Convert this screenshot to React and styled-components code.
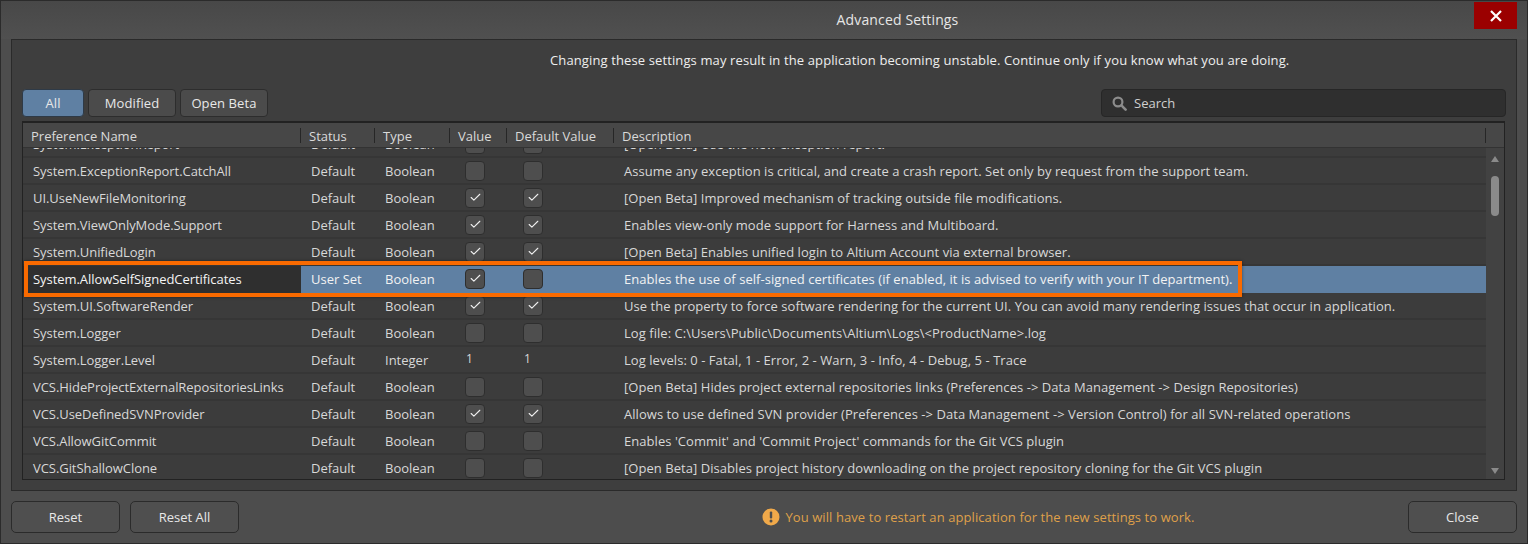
import React from 'react';
import styled, { createGlobalStyle } from 'styled-components';
import { Check } from 'lucide-react';

const GlobalStyle = createGlobalStyle`
  html, body {
    margin: 0;
    padding: 0;
    background: #4b4b4b;
  }
  * {
    box-sizing: border-box;
  }
`;

const Stage = styled.div`
  position: relative;
  width: 1528px;
  height: 544px;
`;

const Window = styled.div`
  width: 1528px;
  height: 544px;
  display: flex;
  flex-direction: column;
  background: #4d4d4d;
  border: 1px solid #2b2b2b;
  font-family: 'Open Sans', 'Noto Sans', sans-serif;
  font-size: 13px;
  color: #dcdcdc;
  overflow: hidden;
`;

const TitleBar = styled.div`
  height: 38px;
  flex: none;
  display: flex;
  align-items: center;
  justify-content: center;
  position: relative;
  font-size: 14px;
  letter-spacing: 0.14px;
  color: #e6e6e6;
  padding-left: 267px;
  padding-bottom: 1px;
  background: linear-gradient(#484848, #505050);
`;

const CloseButton = styled.button`
  position: absolute;
  top: 1px;
  right: 10px;
  width: 43px;
  height: 27px;
  border: 0;
  padding: 0;
  background: #9b0000;
  display: flex;
  align-items: center;
  justify-content: center;
`;

const Panel = styled.div`
  flex: none;
  height: 452px;
  margin: 0 10px;
  padding: 0 11px 10px 10px;
  background: #3e3e3e;
  border: 1px solid #2a2a2a;
  display: flex;
  flex-direction: column;
`;

const Warning = styled.div`
  height: 39px;
  flex: none;
  padding-left: 528px;
  display: flex;
  align-items: center;
  letter-spacing: 0.12px;
  color: #eeeeee;
`;

const FilterBar = styled.div`
  height: 42px;
  flex: none;
  padding-top: 10px;
  padding-bottom: 4px;
  display: flex;
  gap: 4px;
  justify-content: flex-start;
`;

const FilterButton = styled.button`
  width: ${p => p.$width}px;
  height: 28px;
  padding: 0;
  border-radius: 4px;
  border: 1px solid ${p => (p.$active ? '#2e3a47' : '#2d2d2d')};
  background: ${p => (p.$active ? '#5f80a3' : '#4b4b4b')};
  color: #e8e8e8;
  font: inherit;
  letter-spacing: 0.1px;
`;

const SearchBox = styled.div`
  width: 405px;
  height: 28px;
  margin-left: auto;
  margin-right: -1px;
  padding-left: 10px;
  display: flex;
  align-items: center;
  gap: 7px;
  border-radius: 4px;
  border: 1px solid #262626;
  background: #2f2f2f;
  color: #cfcfcf;
`;

const Table = styled.div`
  flex: 1;
  min-height: 0;
  display: flex;
  flex-direction: column;
  border: 1px solid #222222;
  border-top-width: 2px;
  background: #3c3c3c;
`;

const HeaderRow = styled.div`
  height: 25px;
  flex: none;
  display: flex;
  align-items: center;
  padding-top: 1px;
  background: #474747;
  border-bottom: 1px solid #333333;
  color: #dadada;
`;

const HeaderCell = styled.div`
  width: ${p => p.$width}px;
  flex: none;
  height: 15px;
  display: flex;
  align-items: center;
  padding-left: 8px;
  border-right: 1px solid #262626;
`;

const TableBody = styled.div`
  flex: 1;
  min-height: 0;
  display: flex;
`;

const RowList = styled.div`
  width: 1463px;
  flex: none;
  overflow: hidden;
`;

/* the list is scrolled: the first row is only partly in view */
const RowScroll = styled.div`
  margin-top: -17px;
`;

const Row = styled.div`
  height: 27px;
  display: flex;
  align-items: center;
  border-bottom: 2px solid ${p => (p.$selected ? '#5f80a3' : '#363636')};
  background: ${p => (p.$selected ? '#5f80a3' : '#3c3c3c')};
  color: ${p => (p.$selected ? '#f2f2f2' : '#d8d8d8')};
`;

const NameCell = styled.div`
  width: 278px;
  height: 100%;
  flex: none;
  padding-left: 10px;
  display: flex;
  align-items: center;
  white-space: nowrap;
  letter-spacing: -0.06px;
  ${p => p.$selected && 'background: #2f2f2f; color: #f4f4f4; box-shadow: 0 2px 0 #2f2f2f;'}
`;

const TextCell = styled.div`
  width: ${p => p.$width}px;
  flex: none;
  padding-left: ${p => p.$pad || 10}px;
  white-space: nowrap;
`;

const DescriptionCell = styled(TextCell)`
  letter-spacing: 0.05px;
`;

const CheckCell = styled.div`
  width: ${p => p.$width}px;
  flex: none;
  padding-left: ${p => p.$pad}px;
  display: flex;
  align-items: center;
`;

const Box = styled.div`
  width: 20px;
  height: 20px;
  border-radius: 4px;
  background: #4e4e4e;
  border: 1px solid #2e2e2e;
  display: flex;
  align-items: center;
  justify-content: center;
  color: #f0f0f0;
`;

const Number = styled.span`
  margin-top: -3px;
  margin-left: 1px;
  font-size: 12px;
`;

const ScrollTrack = styled.div`
  flex: 1;
  background: #424242;
  display: flex;
  flex-direction: column;
  align-items: center;
  padding: 8px 0 5px;
`;

const ScrollThumb = styled.div`
  width: 8px;
  height: 40px;
  margin-top: 14px;
  border-radius: 4px;
  background: #8a8a8a;
`;

const ScrollArrow = styled.div`
  width: 0;
  height: 0;
  border-left: 4px solid transparent;
  border-right: 4px solid transparent;
  ${p => (p.$down ? 'border-top: 6px solid #8a8a8a; margin-top: auto;' : 'border-bottom: 6px solid #8a8a8a;')}
`;

const Footer = styled.div`
  flex: 1;
  display: flex;
  align-items: center;
  gap: 10px;
  padding: 0 10px 1px;
`;

const FooterButton = styled.button`
  width: 109px;
  height: 32px;
  padding: 0;
  border-radius: 5px;
  border: 1px solid #2b2b2b;
  background: #4f4f4f;
  color: #e8e8e8;
  font: inherit;
`;

const Notice = styled.div`
  flex: 1;
  display: flex;
  align-items: center;
  justify-content: center;
  gap: 5px;
  padding-left: 332px;
  padding-right: 22px;
  letter-spacing: 0.08px;
  color: #dfa04a;
`;

const Highlight = styled.div`
  position: absolute;
  left: 24px;
  top: 261px;
  width: 1218px;
  height: 36px;
  border: 4px solid #f96a00;
  box-shadow: 0 0 3px rgba(0, 0, 0, 0.45);
  pointer-events: none;
`;

const ROWS = [
  ['System.ExceptionReport', 'Default', 'Boolean', false, false, '[Open Beta] Use the new exception report.'],
  ['System.ExceptionReport.CatchAll', 'Default', 'Boolean', false, false, 'Assume any exception is critical, and create a crash report. Set only by request from the support team.'],
  ['UI.UseNewFileMonitoring', 'Default', 'Boolean', true, true, '[Open Beta] Improved mechanism of tracking outside file modifications.'],
  ['System.ViewOnlyMode.Support', 'Default', 'Boolean', true, true, 'Enables view-only mode support for Harness and Multiboard.'],
  ['System.UnifiedLogin', 'Default', 'Boolean', true, true, '[Open Beta] Enables unified login to Altium Account via external browser.'],
  ['System.AllowSelfSignedCertificates', 'User Set', 'Boolean', true, false, 'Enables the use of self-signed certificates (if enabled, it is advised to verify with your IT department).', true],
  ['System.UI.SoftwareRender', 'Default', 'Boolean', true, true, 'Use the property to force software rendering for the current UI. You can avoid many rendering issues that occur in application.'],
  ['System.Logger', 'Default', 'Boolean', false, false, 'Log file: C:\\Users\\Public\\Documents\\Altium\\Logs\\<ProductName>.log'],
  ['System.Logger.Level', 'Default', 'Integer', 1, 1, 'Log levels: 0 - Fatal, 1 - Error, 2 - Warn, 3 - Info, 4 - Debug, 5 - Trace'],
  ['VCS.HideProjectExternalRepositoriesLinks', 'Default', 'Boolean', false, false, '[Open Beta] Hides project external repositories links (Preferences -> Data Management -> Design Repositories)'],
  ['VCS.UseDefinedSVNProvider', 'Default', 'Boolean', true, true, 'Allows to use defined SVN provider (Preferences -> Data Management -> Version Control) for all SVN-related operations'],
  ['VCS.AllowGitCommit', 'Default', 'Boolean', false, false, "Enables 'Commit' and 'Commit Project' commands for the Git VCS plugin"],
  ['VCS.GitShallowClone', 'Default', 'Boolean', false, false, '[Open Beta] Disables project history downloading on the project repository cloning for the Git VCS plugin'],
];

const COLUMNS = [
  ['Preference Name', 278],
  ['Status', 74],
  ['Type', 75],
  ['Value', 57],
  ['Default Value', 107],
  ['Description', 872],
];

function Cell({ value }) {
  if (typeof value === 'number') {
    return <Number>{value}</Number>;
  }
  return <Box>{value && <Check size={13} strokeWidth={2} />}</Box>;
}

function PreferenceRow({ row }) {
  const [name, status, type, value, def, description, selected] = row;
  return (
    <Row $selected={selected}>
      <NameCell $selected={selected}>{name}</NameCell>
      <TextCell $width={75}>{status}</TextCell>
      <TextCell $width={77} $pad={9}>{type}</TextCell>
      <CheckCell $width={57} $pad={12}><Cell value={value} /></CheckCell>
      <CheckCell $width={101} $pad={13}><Cell value={def} /></CheckCell>
      <DescriptionCell $width={860} $pad={13}>{description}</DescriptionCell>
    </Row>
  );
}

export default function App() {
  return (
    <Stage>
      <GlobalStyle />
      <Window>
        <TitleBar>
          Advanced Settings
          <CloseButton>
            <svg width="12" height="12" viewBox="0 0 12 12">
              <path d="M1 1L11 11M11 1L1 11" stroke="#fff" strokeWidth="2.2" />
            </svg>
          </CloseButton>
        </TitleBar>
        <Panel>
          <Warning>
            Changing these settings may result in the application becoming unstable. Continue only if you know what you are doing.
          </Warning>
          <FilterBar>
            <FilterButton $width={62} $active>All</FilterButton>
            <FilterButton $width={88}>Modified</FilterButton>
            <FilterButton $width={88}>Open Beta</FilterButton>
            <SearchBox>
              <svg width="15" height="15" viewBox="0 0 15 15">
                <circle cx="6" cy="6" r="4.4" fill="none" stroke="#8c8c8c" strokeWidth="2.2" />
                <path d="M9.4 9.4L13.6 13.6" stroke="#8c8c8c" strokeWidth="2.6" strokeLinecap="round" />
              </svg>
              Search
            </SearchBox>
          </FilterBar>
          <Table>
            <HeaderRow>
              {COLUMNS.map(([label, width]) => (
                <HeaderCell key={label} $width={width}>{label}</HeaderCell>
              ))}
            </HeaderRow>
            <TableBody>
              <RowList>
                <RowScroll>
                  {ROWS.map(row => <PreferenceRow key={row[0]} row={row} />)}
                </RowScroll>
              </RowList>
              <ScrollTrack>
                <ScrollArrow />
                <ScrollThumb />
                <ScrollArrow $down />
              </ScrollTrack>
            </TableBody>
          </Table>
        </Panel>
        <Footer>
          <FooterButton>Reset</FooterButton>
          <FooterButton>Reset All</FooterButton>
          <Notice>
            <svg width="18" height="18" viewBox="0 0 18 18">
              <circle cx="9" cy="9" r="8.5" fill="#f0a94a" />
              <rect x="7.8" y="3.6" width="2.4" height="6.8" rx="1" fill="#4d4d4d" />
              <circle cx="9" cy="13" r="1.5" fill="#4d4d4d" />
            </svg>
            You will have to restart an application for the new settings to work.
          </Notice>
          <FooterButton>Close</FooterButton>
        </Footer>
      </Window>
      <Highlight />
    </Stage>
  );
}
